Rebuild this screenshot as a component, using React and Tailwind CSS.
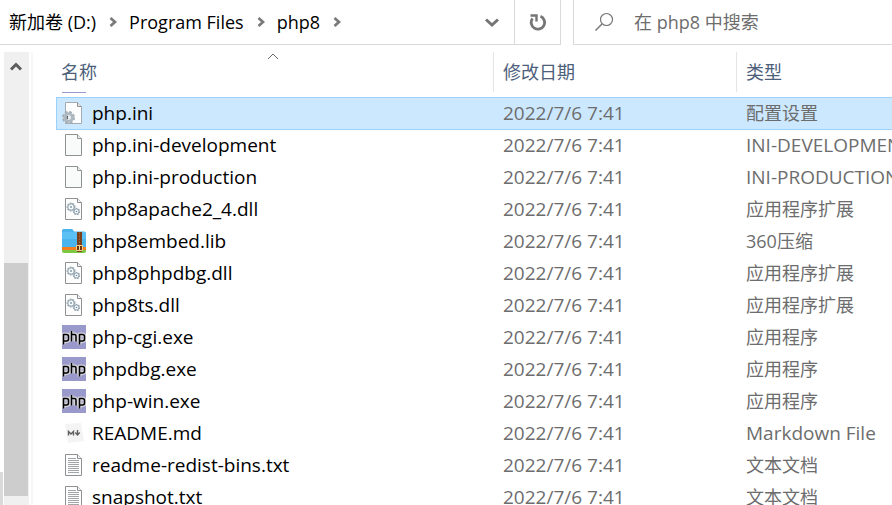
import React from "react";

function PagePaper({ fill = "#fdfdfd" }) {
  return (
    <>
      <path d="M3.5 1.5h12l4 4v17h-16z" fill={fill} stroke="#8f9294" />
      <path d="M15.5 1.5v4h4" fill="#eef0f1" stroke="#8f9294" />
    </>
  );
}

function Icon({ children }) {
  return (
    <svg className="size-6 shrink-0" viewBox="0 0 24 24" aria-hidden="true">
      {children}
    </svg>
  );
}

function Gear({ cx, cy, r, width, color, hole }) {
  return (
    <g fill="none">
      <circle cx={cx} cy={cy} r={r} stroke={color} strokeWidth={width} strokeDasharray="1.6 1.1" />
      <circle cx={cx} cy={cy} r={r - width / 2} stroke={color} strokeWidth={width} />
      <circle cx={cx} cy={cy} r={hole} fill="#f4f8fa" />
    </g>
  );
}

const icons = {
  ini: (
    <Icon>
      <path d="M3.5 1.5h12l4 4v17h-16z" fill="#fdfdfd" stroke="#a4abb0" />
      <path d="M15.5 1.5v4h4" fill="#e4e8ea" stroke="#8f9294" />
      <circle cx="6.5" cy="16.5" r="5.4" fill="none" stroke="#a3adb4" strokeWidth="2.2" strokeDasharray="2.6 1.64" />
      <circle cx="6.5" cy="16.5" r="3.8" fill="none" stroke="#adb8c0" strokeWidth="3" />
      <circle cx="6.5" cy="16.5" r="2.2" fill="#e6edf1" />
      <path d="M5.5 14.8q-.8 1.700 0 3.400" fill="none" stroke="#56616a" strokeWidth="1.4" />
    </Icon>
  ),
  page: (
    <Icon>
      <PagePaper fill="#f9fafa" />
    </Icon>
  ),
  dll: (
    <Icon>
      <PagePaper />
      <Gear cx={9} cy={10} r={3.8} width={1.3} color="#9aabb6" hole={1.8} />
      <Gear cx={14.5} cy={14.5} r={3.1} width={1.2} color="#9aabb6" hole={1.3} />
      <circle cx="9" cy="10" r="0.9" fill="#7d929f" />
      <circle cx="14.5" cy="14.5" r="0.8" fill="#7d929f" />
    </Icon>
  ),
  zip: (
    <Icon>
      <path d="M0 1.5Q0 0 1.5 0h8q1.5 0 2 1.5l.5 1H22q2 0 2 2V20H0z" fill="#49b4ee" />
      <path d="M0 3h24v7H0z" fill="#6dcbf7" opacity="0.5" />
      <path d="M0 18h24v3H0z" fill="#f47f20" />
      <path d="M0 21h24v1q0 2-2 2H2q-2 0-2-2z" fill="#7cc840" />
      <path d="M15 3h5v20h-5z" fill="#7b3f1c" />
      <path d="M17.5 3.5v13" stroke="#a8693a" strokeDasharray="1.5 1.5" />
      <path d="M14.5 16.5h6v5h-6z" fill="#6d3312" stroke="#f3d08a" />
      <path d="M17.5 17v4" stroke="#f7dc9b" />
    </Icon>
  ),
  php: (
    <Icon>
      <path d="M0 0h24v24H0z" fill="#9999cc" />
      <g fill="none" strokeLinejoin="round">
        <g stroke="#d4d4da" strokeWidth="4">
          <path d="M1.5 19.5V9.5h3q2 0 2 2v2.5q0 2-2 2h-3M9.5 6V16.5M9.5 9.5h3q1.5 0 1.5 1.5v5.5M17.5 19.5V9.5h3q2 0 2 2v2.5q0 2-2 2h-3" />
        </g>
        <g stroke="#000000" strokeWidth="1.5">
          <path d="M1.5 19.5V9.5h3q2 0 2 2v2.5q0 2-2 2h-3M9.5 6V16.5M9.5 9.5h3q1.5 0 1.5 1.5v5.5M17.5 19.5V9.5h3q2 0 2 2v2.5q0 2-2 2h-3" />
        </g>
      </g>
    </Icon>
  ),
  md: (
    <Icon>
      <path d="M3 3l16-1 3 18-16 2z" fill="#f4f4f4" />
      <path d="M6.5 14.5v-4l2.5 2.5 2.500-2.500v4" fill="none" stroke="#606060" strokeWidth="1.4" />
      <path d="M15.5 9v5M13.3 11.5l2.200 2.500 2.200-2.500" fill="none" stroke="#606060" strokeWidth="1.4" />
    </Icon>
  ),
  txt: (
    <Icon>
      <PagePaper />
      <path
        d="M6 5.5h8M6 7.5h11M6 9.5h11M6 11.5h11M6 13.5h11M6 15.5h11M6 17.5h11M6 19.5h11"
        stroke="#a3a6a8"
      />
    </Icon>
  ),
};

const files = [
  { name: "php.ini", icon: "ini", type: "配置设置", selected: true },
  { name: "php.ini-development", icon: "page", type: "INI-DEVELOPMENT 文件" },
  { name: "php.ini-production", icon: "page", type: "INI-PRODUCTION 文件" },
  { name: "php8apache2_4.dll", icon: "dll", type: "应用程序扩展" },
  { name: "php8embed.lib", icon: "zip", type: "360压缩" },
  { name: "php8phpdbg.dll", icon: "dll", type: "应用程序扩展" },
  { name: "php8ts.dll", icon: "dll", type: "应用程序扩展" },
  { name: "php-cgi.exe", icon: "php", type: "应用程序" },
  { name: "phpdbg.exe", icon: "php", type: "应用程序" },
  { name: "php-win.exe", icon: "php", type: "应用程序" },
  { name: "README.md", icon: "md", type: "Markdown File" },
  { name: "readme-redist-bins.txt", icon: "txt", type: "文本文档" },
  { name: "snapshot.txt", icon: "txt", type: "文本文档" },
];

// Latin type names are set a pixel larger than the Chinese ones.
const startsLatin = (text) => /^[A-Z]/.test(text);

function Crumb({ children }) {
  return (
    <>
      <a href="#" className="text-black">
        {children}
      </a>
      <svg className="mr-3 ml-[13px] h-3 w-2 shrink-0" viewBox="0 0 8 12" aria-hidden="true">
        <path d="M1.5 2l4.5 4-4.5 4" fill="none" stroke="#7a7a7a" strokeWidth="2.8" />
      </svg>
    </>
  );
}

function AddressBar() {
  return (
    <header className="flex h-[45px] shrink-0 gap-3">
      <div className="flex min-w-0 flex-1 border-r border-b border-[#d9d9d9]">
        <nav className="flex min-w-0 flex-1 items-center pl-[9px] text-[18px] whitespace-nowrap">
          <Crumb>新加卷 (D:)</Crumb>
          <Crumb>Program Files</Crumb>
          <Crumb>php8</Crumb>
        </nav>
        <button type="button" aria-label="历史记录" className="flex w-[45px] items-center justify-center">
          <svg className="h-3 w-4" viewBox="0 0 16 12" aria-hidden="true">
            <path d="M2 3.5l6 5.5 6-5.5" fill="none" stroke="#757575" strokeWidth="3" />
          </svg>
        </button>
        <button
          type="button"
          aria-label="刷新"
          className="flex w-[46px] items-center justify-center border-l border-[#d9d9d9]"
        >
          <svg className="size-[18px]" viewBox="0 0 18 18" aria-hidden="true">
            <path d="M3.5 5.5A6.7 6.7 0 1 0 11.5 3.3" fill="none" stroke="#757575" strokeWidth="2.8" />
            <path d="M1.5 2.5h6v6" fill="none" stroke="#757575" strokeWidth="2.4" />
          </svg>
        </button>
      </div>
      <div className="flex w-[319px] items-center border-b border-l border-[#d9d9d9] pl-5">
        <svg className="size-5 shrink-0" viewBox="0 0 20 20" aria-hidden="true">
          <circle cx="12.5" cy="7.5" r="6" fill="none" stroke="#767676" strokeWidth="1.2" />
          <path d="M8 12l-6.5 6.5" stroke="#767676" strokeWidth="1.5" />
        </svg>
        <input
          type="search"
          aria-label="搜索"
          placeholder="在 php8 中搜索"
          className="ml-5 min-w-0 flex-1 text-[18px] outline-none placeholder:text-[#6d6d6d] placeholder:opacity-100"
        />
      </div>
    </header>
  );
}

function NavScrollbar() {
  return (
    <div className="flex shrink-0">
      <div className="flex w-1 flex-col justify-end">
        <div className="mr-px h-[33px] bg-[#d9d9d9]" />
      </div>
      <div className="w-[25px] bg-[#f0f0f0] pr-px">
        <button type="button" aria-label="向上滚动" className="flex h-7 w-full items-center justify-center">
          <svg className="h-3 w-4" viewBox="0 0 16 12" aria-hidden="true">
            <path d="M3 9.5l5-5 5 5" fill="none" stroke="#5c5c5c" strokeWidth="3" />
          </svg>
        </button>
        <div className="mt-[183px] h-[233px] bg-[#cdcdcd]" />
      </div>
      <div className="ml-0.5 w-0.5 bg-[#f7f7f7]" />
    </div>
  );
}

function ColumnLabel({ children, className }) {
  return <div className={`flex h-10 items-center text-[18px] ${className}`}>{children}</div>;
}

function FileTable() {
  return (
    <table className="w-full table-fixed border-separate border-spacing-0 whitespace-nowrap">
      <colgroup>
        <col className="w-[437px]" />
        <col className="w-[243px]" />
        <col />
      </colgroup>
      <thead className="text-left text-[#4c607a]">
        <tr className="h-[45px] align-top">
          <th scope="col" className="relative p-0 font-normal">
            <div className="absolute inset-x-0 top-0 flex justify-center pr-1">
              <svg className="h-2 w-3" viewBox="0 0 12 8" aria-hidden="true">
                <path d="M1 7l5-5 5 5" fill="none" stroke="#666666" />
              </svg>
            </div>
            <ColumnLabel className="pl-[5px]">名称</ColumnLabel>
            <div className="ml-1.5 h-px w-6 bg-[#9999cc]" />
          </th>
          <th scope="col" className="p-0 font-normal">
            <ColumnLabel className="border-l border-[#e5e5e5] pl-[9px]">修改日期</ColumnLabel>
          </th>
          <th scope="col" className="p-0 font-normal">
            <ColumnLabel className="border-l border-[#e5e5e5] pl-[9px]">类型</ColumnLabel>
          </th>
        </tr>
      </thead>
      <tbody>
        {files.map((file) => (
          <tr
            key={file.name}
            className={
              file.selected
                ? "h-8 bg-[#cce8ff] [&>td]:shadow-[inset_0_1px_0_#99d1ff,0_1px_0_#99d1ff] [&>td:first-child]:border-l"
                : "h-8"
            }
          >
            <td className="border-[#99d1ff] p-0">
              <div className={`flex items-center gap-1.5 text-black ${file.selected ? "pl-[5px]" : "pl-1.5"}`}>
                {icons[file.icon]}
                <span>{file.name}</span>
              </div>
            </td>
            <td className="p-0 pl-2.5 text-[#6d6d6d]">2022/7/6 7:41</td>
            <td
              className={`overflow-hidden p-0 pl-2.5 text-[#6d6d6d] ${
                startsLatin(file.type) ? "text-[19px]" : "text-[18px]"
              }`}
            >
              {file.type}
            </td>
          </tr>
        ))}
      </tbody>
    </table>
  );
}

export default function App() {
  return (
    <div className="flex h-screen flex-col overflow-hidden bg-white font-['Open_Sans','Noto_Sans_CJK_SC',sans-serif] text-[19px] leading-6">
      <AddressBar />
      <div className="mt-[7px] flex min-h-0 flex-1">
        <NavScrollbar />
        <main className="ml-[23px] min-w-0 flex-1 overflow-hidden">
          <FileTable />
        </main>
      </div>
    </div>
  );
}
